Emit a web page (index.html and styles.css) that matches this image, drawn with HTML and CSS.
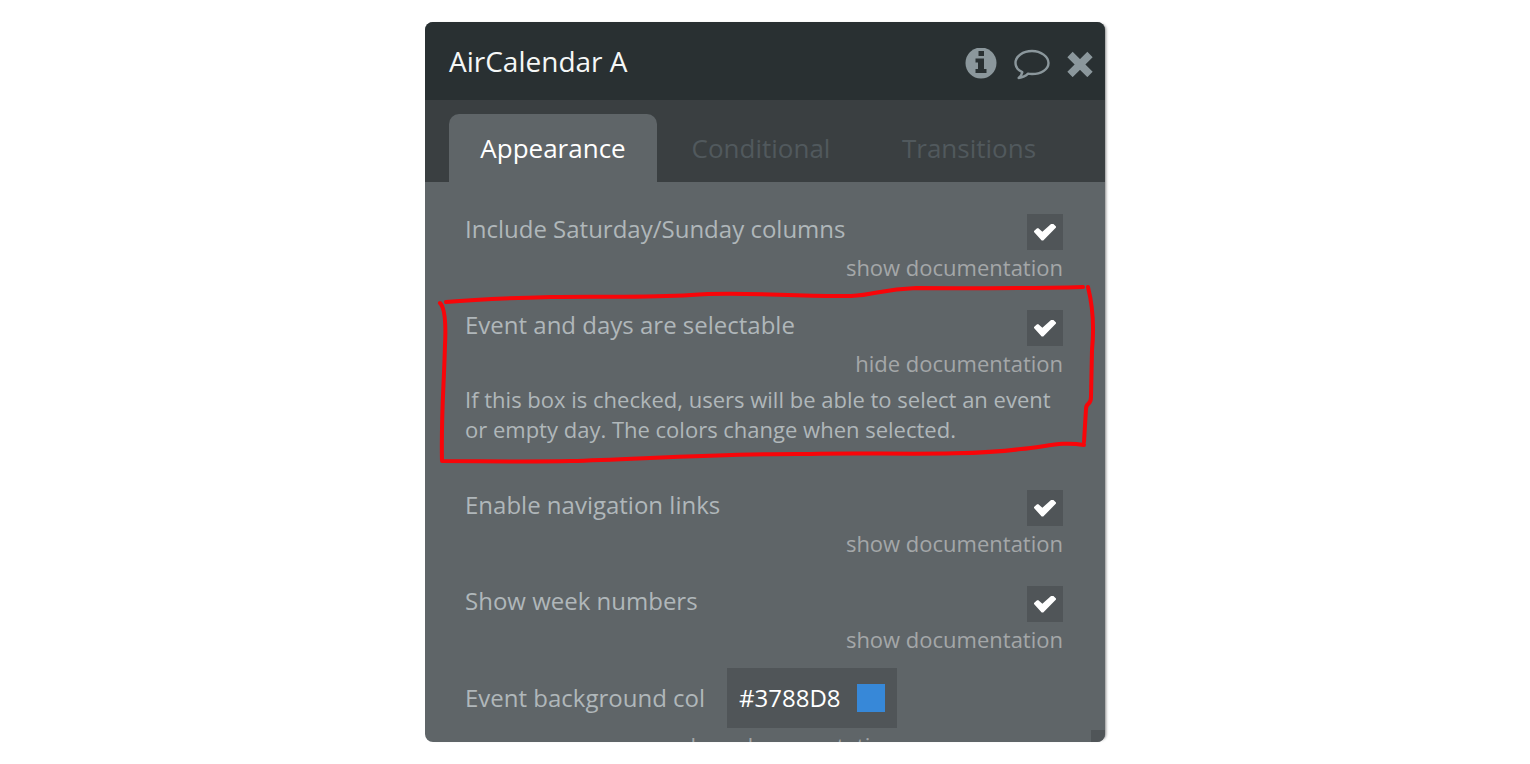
FILE: index.html
```html
<!DOCTYPE html>
<html lang="en">
<head>
<meta charset="utf-8">
<title>AirCalendar A</title>
<link rel="stylesheet" href="styles.css">
</head>
<body>
<main class="panel">
  <header class="panel-header">
    <h1 class="title">AirCalendar A</h1>
    <div class="actions">
      <button class="icon-button" type="button" aria-label="Information">
        <svg width="32" height="32" viewBox="0 0 32 32"><circle cx="16" cy="15" r="15.5" fill="currentColor"/><path class="cutout" d="M13.500 3h5.500v5h-5.500zM10.500 10.500h8.500V21h2.500v4h-11v-4H13v-6.500h-2.500z"/></svg>
      </button>
      <button class="icon-button" type="button" aria-label="Comment">
        <svg width="36" height="34" viewBox="0 0 36 34"><path fill="none" stroke="currentColor" stroke-width="2.400" stroke-linejoin="round" d="M18 4C9 4 1.500 9.200 1.500 16c0 4 2.500 7.200 6.800 9.200-.4 2.400-1.600 4-3.600 5.800 4-.6 7-1.900 9.300-4.300 1.300.3 2.600.3 4 .3 9 0 16.500-4.600 16.500-11S27 4 18 4z"/></svg>
      </button>
      <button class="icon-button" type="button" aria-label="Close">
        <svg width="26" height="26" viewBox="0 0 26 26"><path fill="none" stroke="currentColor" stroke-width="7.500" stroke-linejoin="round" d="M3 3.500l20 20M23 3.500l-20 20"/></svg>
      </button>
    </div>
  </header>
  <nav class="tabs">
    <button class="tab tab-active" type="button">Appearance</button>
    <button class="tab" type="button">Conditional</button>
    <button class="tab" type="button">Transitions</button>
  </nav>
  <section class="properties">
    <div class="property">
      <div class="field"><label for="weekend">Include Saturday/Sunday columns</label><input class="check" id="weekend" type="checkbox" checked></div>
      <a class="doc-link" href="#">show documentation</a>
    </div>
    <div class="property property-documented">
      <div class="field"><label for="selectable">Event and days are selectable</label><input class="check" id="selectable" type="checkbox" checked></div>
      <a class="doc-link" href="#">hide documentation</a>
      <p class="doc-text">If this box is checked, users will be able to select an event or empty day. The colors change when selected.</p>
      <svg class="marker" viewBox="0 0 660 180" preserveAspectRatio="none" aria-hidden="true"><path d="M5 17C40 14 70 13 110 12C160 11 200 13 250 10C300 6 350 12 410 11C435 10 440 4 475 3C530 3 580 4 642 2M647 2C652 22 653 45 651 65L650 112C650 121 645 117 645 124L643 157M643 160C620 156 605 162 580 164C520 172 430 167 370 169C290 168 200 174 130 176C80 177 40 176 1 176C0 130 3 100 4 60C5 40 4 23 -1 18"/></svg>
    </div>
    <div class="property">
      <div class="field"><label for="navigation">Enable navigation links</label><input class="check" id="navigation" type="checkbox" checked></div>
      <a class="doc-link" href="#">show documentation</a>
    </div>
    <div class="property property-last-check">
      <div class="field"><label for="weeks">Show week numbers</label><input class="check" id="weeks" type="checkbox" checked></div>
      <a class="doc-link" href="#">show documentation</a>
    </div>
    <div class="property color-property">
      <label for="background">Event background col</label>
      <div class="color-field"><input class="hex" id="background" type="text" value="#3788D8"><button class="swatch" type="button" aria-label="Choose color"></button></div>
      <a class="doc-link color-doc" href="#">show documentation</a>
    </div>
  </section>
  <div class="scroll-corner"></div>
</main>
</body>
</html>
```
FILE: styles.css
```css
* { box-sizing: border-box; }
body {
  margin: 0;
  padding: 22px 16px;
  background: #fff;
  font-family: "Open Sans", "Noto Sans", sans-serif;
  font-size: 24px;
  color: #b0b7ba;
}
button, input { font: inherit; border: 0; padding: 0; }
.panel {
  position: relative;
  max-width: 680px;
  height: calc(100vh - 44px);
  margin: 0 auto;
  overflow: hidden;
  background: #5f6568;
  border-radius: 8px;
  box-shadow: 3px 0 3px -2px #0007;
}
.panel-header {
  display: flex;
  align-items: center;
  justify-content: space-between;
  height: 78px;
  padding: 0 12px 0 24px;
  background: #293032;
}
.title { margin: 0; font-size: 28px; line-height: 40px; font-weight: 400; color: #f5f7f7; }
.actions { display: flex; align-items: center; gap: 17px; padding-top: 6px; }
.icon-button { display: flex; background: none; color: #8b979c; }
.cutout { fill: #293032; }
.tabs { display: flex; padding: 14px 24px 0; background: #3a3f41; }
.tab {
  width: 208px;
  height: 68px;
  background: none;
  color: #51595d;
  font-size: 26px;
  border-radius: 10px 10px 0 0;
}
.tab-active { background: #5f6568; color: #fff; }
.properties { padding: 32px 42px 0 40px; }
.property { position: relative; margin-bottom: 26px; }
.property-documented { margin-bottom: 46px; }
.property-last-check { margin-bottom: 12px; }
.field { display: flex; justify-content: space-between; }
label { line-height: 30px; }
.check {
  appearance: none;
  display: grid;
  place-items: center;
  width: 36px;
  height: 36px;
  margin: 0;
  background: #505558;
}
.check:checked::before {
  content: "";
  width: 22px;
  height: 17px;
  background: #fff;
  clip-path: polygon(0 50%, 0 44%, 14% 28%, 20% 28%, 38% 48%, 80% 0, 86% 0, 100% 17%, 100% 24%, 42% 100%, 35% 100%);
}
.doc-link {
  display: block;
  text-align: right;
  font-size: 22px;
  line-height: 34px;
  color: #a4a7a8;
  text-decoration: none;
}
.doc-text { margin: 4px 0 0; font-size: 22px; line-height: 30px; }
.marker {
  position: absolute;
  left: -24px;
  top: -25px;
  width: calc(100% + 62px);
  height: 180px;
  overflow: visible;
  pointer-events: none;
}
.marker path { fill: none; stroke: #f80509; stroke-width: 4; stroke-linecap: round; stroke-linejoin: round; }
.color-property { display: grid; grid-template-columns: 262px 170px; align-items: center; }
.color-field { display: flex; align-items: center; justify-content: space-between; height: 60px; padding: 0 12px; background: #505558; }
.hex { width: 108px; padding-bottom: 2px; background: none; color: #fff; }
.swatch { width: 28px; height: 28px; background: #3788d8; }
.color-doc { grid-column: 2; justify-self: end; white-space: nowrap; }
.scroll-corner { position: absolute; right: 0; bottom: 0; width: 14px; height: 12px; background: #505558; }
```
